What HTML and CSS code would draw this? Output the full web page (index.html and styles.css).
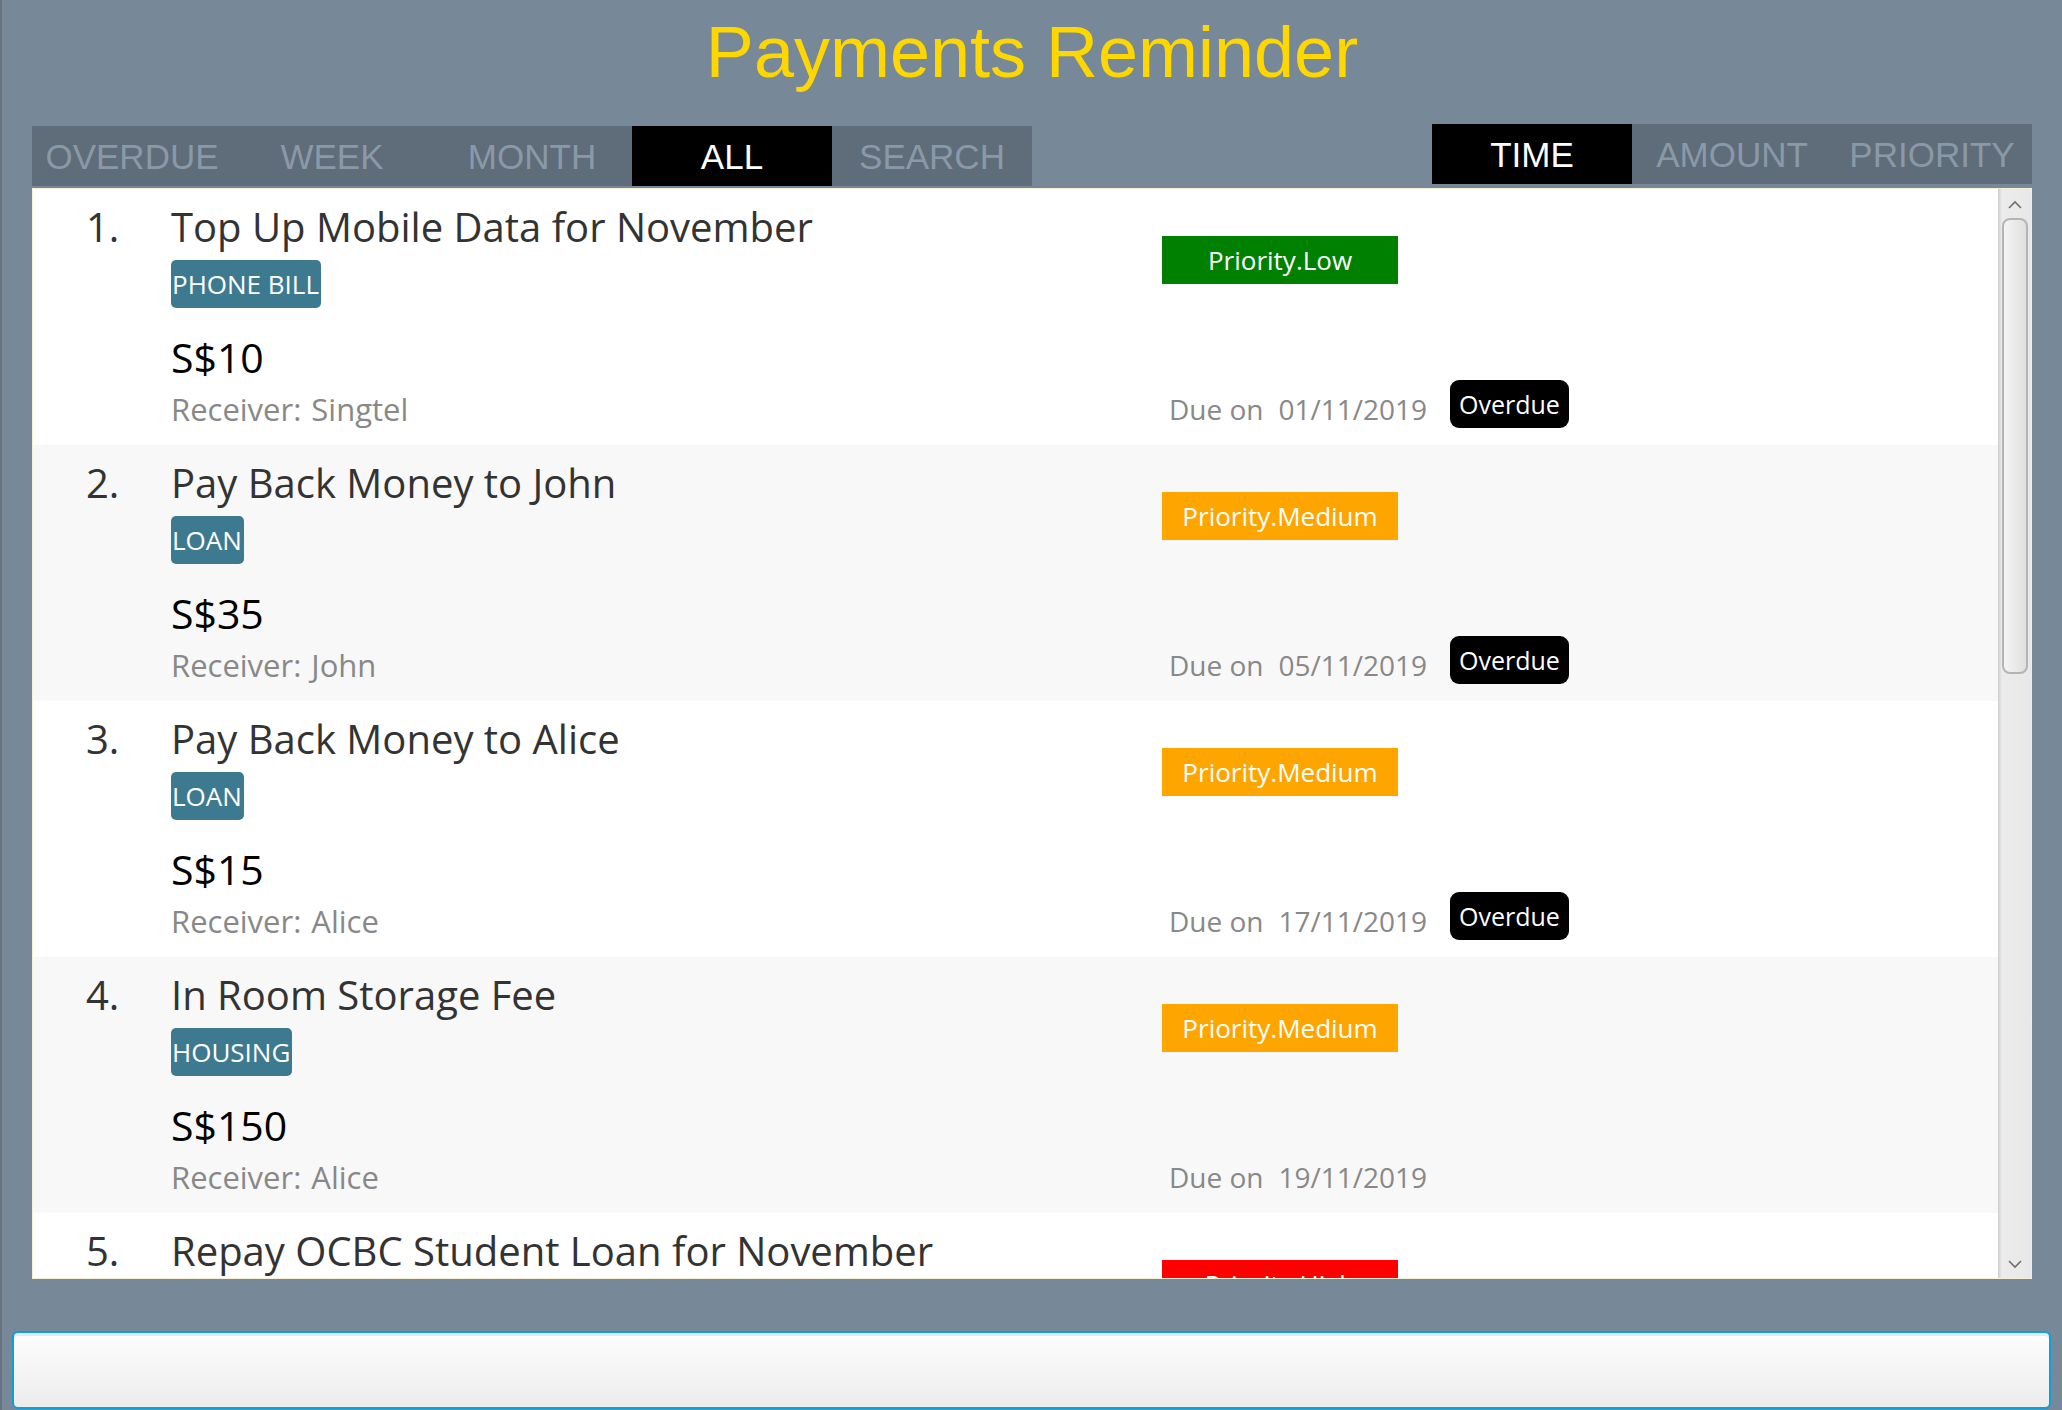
FILE: index.html
```html
<!DOCTYPE html>
<html lang="en">
<head>
<meta charset="utf-8">
<title>Payments Reminder</title>
<link rel="stylesheet" href="styles.css">
</head>
<body>
<div class="app">
  <header class="header">
    <h1 class="title">Payments Reminder</h1>
  </header>
  <div class="toolbar">
    <nav class="tabs tabs-left">
      <span class="tab">OVERDUE</span>
      <span class="tab">WEEK</span>
      <span class="tab">MONTH</span>
      <span class="tab active">ALL</span>
      <span class="tab">SEARCH</span>
    </nav>
    <nav class="tabs tabs-right">
      <span class="tab active">TIME</span>
      <span class="tab">AMOUNT</span>
      <span class="tab">PRIORITY</span>
    </nav>
  </div>
  <section class="panel">
    <div class="list">
      <article class="card">
        <div class="idx">1.</div>
        <div class="main">
          <div class="name">Top Up Mobile Data for November</div>
          <div class="tags"><span class="tag">PHONE BILL</span></div>
          <div class="amount">S$10</div>
          <div class="receiver"><span>Receiver:</span><span>Singtel</span></div>
        </div>
        <div class="side">
          <div class="priority low">Priority.Low</div>
          <div class="due-row">
            <div class="due"><span>Due on</span><span>01/11/2019</span></div>
            <span class="overdue">Overdue</span>
          </div>
        </div>
      </article>
      <article class="card alt">
        <div class="idx">2.</div>
        <div class="main">
          <div class="name">Pay Back Money to John</div>
          <div class="tags"><span class="tag">LOAN</span></div>
          <div class="amount">S$35</div>
          <div class="receiver"><span>Receiver:</span><span>John</span></div>
        </div>
        <div class="side">
          <div class="priority medium">Priority.Medium</div>
          <div class="due-row">
            <div class="due"><span>Due on</span><span>05/11/2019</span></div>
            <span class="overdue">Overdue</span>
          </div>
        </div>
      </article>
      <article class="card">
        <div class="idx">3.</div>
        <div class="main">
          <div class="name">Pay Back Money to Alice</div>
          <div class="tags"><span class="tag">LOAN</span></div>
          <div class="amount">S$15</div>
          <div class="receiver"><span>Receiver:</span><span>Alice</span></div>
        </div>
        <div class="side">
          <div class="priority medium">Priority.Medium</div>
          <div class="due-row">
            <div class="due"><span>Due on</span><span>17/11/2019</span></div>
            <span class="overdue">Overdue</span>
          </div>
        </div>
      </article>
      <article class="card alt">
        <div class="idx">4.</div>
        <div class="main">
          <div class="name">In Room Storage Fee</div>
          <div class="tags"><span class="tag">HOUSING</span></div>
          <div class="amount">S$150</div>
          <div class="receiver"><span>Receiver:</span><span>Alice</span></div>
        </div>
        <div class="side">
          <div class="priority medium">Priority.Medium</div>
          <div class="due-row">
            <div class="due"><span>Due on</span><span>19/11/2019</span></div>
          </div>
        </div>
      </article>
      <article class="card">
        <div class="idx">5.</div>
        <div class="main">
          <div class="name">Repay OCBC Student Loan for November</div>
          <div class="tags"><span class="tag">LOAN</span></div>
          <div class="amount">S$200</div>
          <div class="receiver"><span>Receiver:</span><span>OCBC</span></div>
        </div>
        <div class="side">
          <div class="priority high">Priority.High</div>
        </div>
      </article>
    </div>
    <div class="scrollbar">
      <div class="sb-btn">
        <svg width="14" height="9" viewBox="0 0 14 9"><path d="M1 8 L7 2 L13 8" fill="none" stroke="#6f6f6f" stroke-width="1.6"/></svg>
      </div>
      <div class="sb-thumb"></div>
      <div class="sb-space"></div>
      <div class="sb-btn">
        <svg width="14" height="9" viewBox="0 0 14 9"><path d="M1 1 L7 7 L13 1" fill="none" stroke="#6f6f6f" stroke-width="1.6"/></svg>
      </div>
    </div>
  </section>
  <div class="command">
    <input class="command-input" type="text" aria-label="Command">
  </div>
</div>
</body>
</html>
```
FILE: styles.css
```css
* { box-sizing: border-box; }

html, body {
  margin: 0;
  padding: 0;
}

body {
  background: #778899;
  width: 2062px;
  height: 1410px;
  overflow: hidden;
  border-left: 2px solid #66737f;
  font-family: "Open Sans", "Noto Sans", sans-serif;
}

.app {
  display: flex;
  flex-direction: column;
  height: 1410px;
}

.header {
  padding-top: 17px;
  display: flex;
  justify-content: center;
}

.title {
  margin: 0;
  font-family: "Liberation Sans", Arial, sans-serif;
  font-weight: normal;
  font-size: 72px;
  line-height: 71px;
  color: #ffd700;
}

.toolbar {
  margin-top: 36px;
  height: 62px;
  padding: 0 30px 0 30px;
  display: flex;
  justify-content: space-between;
  align-items: flex-start;
}

.tabs {
  display: flex;
  background: #5f6c79;
  height: 60px;
}

.tabs-left { margin-top: 2px; }

.tab {
  width: 200px;
  height: 60px;
  display: flex;
  align-items: center;
  justify-content: center;
  padding-top: 2px;
  font-family: "Liberation Sans", Arial, sans-serif;
  font-size: 35px;
  color: #8a99a8;
}

.tab.active {
  background: #000;
  color: #fff;
}

.panel {
  margin: 2px 30px 0 30px;
  height: 1091px;
  border: 1px solid #f7eed6;
  background: #fff;
  display: flex;
  overflow: hidden;
}

.list {
  flex: 1;
  overflow: hidden;
}

.card {
  height: 256px;
  padding: 14px 0 0 53px;
  display: flex;
  background: #fff;
}

.card.alt { background: #f8f8f8; }

.idx {
  width: 85px;
  font-size: 40px;
  line-height: 48px;
  color: #333;
}

.main {
  width: 991px;
  display: flex;
  flex-direction: column;
  align-items: flex-start;
}

.name {
  font-size: 40px;
  line-height: 48px;
  color: #333;
  white-space: nowrap;
}

.tags {
  margin-top: 9px;
  display: flex;
}

.tag {
  height: 48px;
  line-height: 48px;
  padding: 0 2px 0 1px;
  font-size: 26px;
  color: #fff;
  background: #3e7a8f;
  border-radius: 5px;
}

.amount {
  margin-top: 27px;
  font-size: 41px;
  line-height: 44px;
  color: #000;
}

.receiver {
  margin-top: 13px;
  font-size: 31px;
  line-height: 34px;
  color: #888;
  display: flex;
  gap: 10px;
}

.side {
  display: flex;
  flex-direction: column;
  align-items: flex-start;
  padding-top: 33px;
}

.priority {
  width: 236px;
  height: 48px;
  line-height: 48px;
  text-align: center;
  font-size: 26px;
  color: #fff;
}

.priority.low { background: #008000; }
.priority.medium { background: #ffa500; }
.priority.high { background: #ff0000; }

.due-row {
  margin-top: 96px;
  display: flex;
  align-items: flex-start;
}

.due {
  width: 281px;
  margin-left: 7px;
  margin-top: 12px;
  display: flex;
  gap: 15px;
  font-size: 28px;
  line-height: 34px;
  color: #888;
}

.overdue {
  height: 48px;
  line-height: 48px;
  padding: 0 9px;
  font-size: 25px;
  color: #fff;
  background: #000;
  border-radius: 9px;
}

.scrollbar {
  width: 33px;
  display: flex;
  flex-direction: column;
  align-items: center;
  padding-top: 2px;
  background: linear-gradient(to right, #d6d6d6 0, #ececec 3px, #e8e8e8 100%);
  border-left: 1px solid #d0d0d0;
}

.sb-btn {
  height: 27px;
  width: 100%;
  display: flex;
  align-items: center;
  justify-content: center;
}

.sb-thumb {
  width: 26px;
  height: 456px;
  border: 2px solid #b4b4b4;
  border-radius: 8px;
  background: linear-gradient(to right, #f4f4f4, #e0e0e0);
}

.sb-space { flex: 1; }

.command {
  margin: 52px 11px 0 10px;
  height: 78px;
}

.command-input {
  display: block;
  width: 100%;
  height: 100%;
  border: 2px solid #0f9fd5;
  border-radius: 6px;
  background: linear-gradient(#fdfdfd, #ececec);
  box-shadow: inset 0 3px 0 #dcedf6;
  outline: none;
  font-family: "Open Sans", sans-serif;
  font-size: 28px;
}
```
